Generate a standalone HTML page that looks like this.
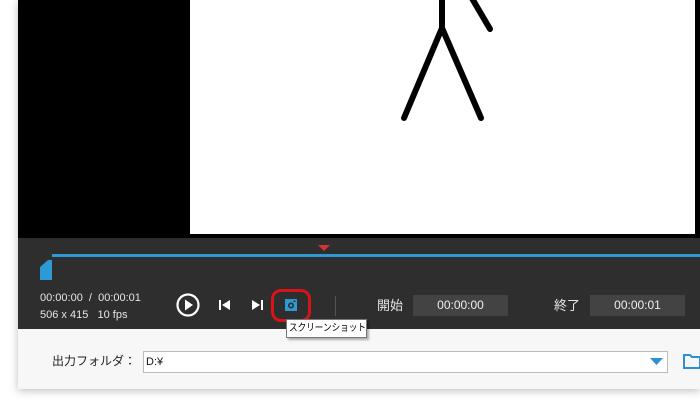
<!DOCTYPE html>
<html><head><meta charset="utf-8"><style>
*{margin:0;padding:0;box-sizing:border-box}
body{width:700px;height:407px;overflow:hidden;background:#fff;position:relative;font-family:"Liberation Sans","Noto Sans CJK JP",sans-serif}
.win{position:absolute;left:18px;top:0;width:682px;height:389px;background:#f7f7f7;box-shadow:0 2px 8px rgba(0,0,0,.25)}
.video{position:absolute;left:18px;top:0;width:682px;height:238px;background:#000}
.frame{position:absolute;left:190px;top:0;width:505px;height:234px;background:#fff}
.bar{position:absolute;left:18px;top:238px;width:682px;height:91px;background:#2e2e2e}
.t{position:absolute;color:#e6e6e6;font-size:11px;white-space:nowrap}
.box{position:absolute;top:295px;height:21px;background:#434343;color:#eee;font-size:12px;text-align:center;line-height:21px}
</style></head><body>
<div class="win"></div>
<div class="video"></div>
<div class="frame"></div>
<svg style="position:absolute;left:0;top:0" width="700" height="240">
<g stroke="#000" stroke-width="6" stroke-linecap="round" fill="none">
<line x1="442" y1="-5" x2="442" y2="28"/>
<line x1="442" y1="28" x2="404" y2="118"/>
<line x1="442" y1="28" x2="481" y2="118"/>
<line x1="470" y1="-5" x2="490" y2="29"/>
</g></svg>
<div class="bar"></div>
<div style="position:absolute;left:52px;top:254px;width:648px;height:3px;background:#2d9ad6"></div>
<svg style="position:absolute;left:318px;top:245px" width="12" height="7"><polygon points="0,0 12,0 6,6" fill="#d9322a"/></svg>
<svg style="position:absolute;left:38px;top:259px" width="16" height="23"><path d="M2 8 L10 1 H14 V21 H2 Z" fill="#2d9ad6"/></svg>
<div class="t" style="left:40px;top:292px">00:00:00 &nbsp;/ &nbsp;00:00:01</div>
<div class="t" style="left:40px;top:309px">506 x 415 &nbsp;&nbsp;10 fps</div>
<svg style="position:absolute;left:175px;top:292px" width="26" height="26"><circle cx="13" cy="13" r="10.5" stroke="#fff" stroke-width="2.2" fill="none"/><polygon points="10,7.5 10,18.5 18,13" fill="#fff"/></svg>
<svg style="position:absolute;left:218px;top:298px" width="14" height="14"><rect x="1" y="2" width="2" height="10" fill="#fff"/><polygon points="12,2 12,12 4,7" fill="#fff"/></svg>
<svg style="position:absolute;left:251px;top:298px" width="14" height="14"><polygon points="1,2 1,12 9,7" fill="#fff"/><rect x="10" y="2" width="2" height="10" fill="#fff"/></svg>
<div style="position:absolute;left:271px;top:289px;width:40px;height:33px;border:3px solid #d7141a;border-radius:10px"></div>
<svg style="position:absolute;left:284px;top:298px" width="14" height="14"><rect x="1" y="1" width="12" height="12" fill="#2d9ad6"/><circle cx="7" cy="7.5" r="3" fill="#2e2e2e"/><circle cx="7" cy="7.5" r="1.4" fill="#2d9ad6"/><rect x="9.5" y="2.5" width="2" height="1.5" fill="#2e2e2e"/></svg>
<div style="position:absolute;left:335px;top:296px;width:1px;height:20px;background:#555"></div>
<div class="t" style="left:377px;top:295px;font-size:13px">開始</div>
<div class="box" style="left:413px;width:95px">00:00:00</div>
<div class="t" style="left:554px;top:295px;font-size:13px">終了</div>
<div class="box" style="left:590px;width:95px">00:00:01</div>
<div style="position:absolute;left:286px;top:319px;width:81px;height:19px;background:#fff;border:1px solid #777;box-shadow:2px 2px 2px rgba(0,0,0,.3);font-size:10px;line-height:17px;padding-left:2px;color:#000;white-space:nowrap;overflow:hidden"><span style="display:inline-block;transform:scaleX(0.86);transform-origin:left">スクリーンショット</span></div>
<div style="position:absolute;left:52px;top:352px;font-size:12px;color:#222">出力フォルダ：</div>
<div style="position:absolute;left:143px;top:351px;width:525px;height:22px;background:#fff;border:1px solid #bbb;font-size:11px;line-height:20px;padding-left:2px;color:#111">D:¥</div>
<svg style="position:absolute;left:650px;top:358px" width="14" height="8"><polygon points="0,0 13,0 6.5,7" fill="#2d8fd6"/></svg>
<svg style="position:absolute;left:683px;top:352px" width="17" height="18"><path d="M1 3 H7 L9 5 H17 V16 H1 Z" fill="none" stroke="#2d8fd6" stroke-width="2"/></svg>
</body></html>
